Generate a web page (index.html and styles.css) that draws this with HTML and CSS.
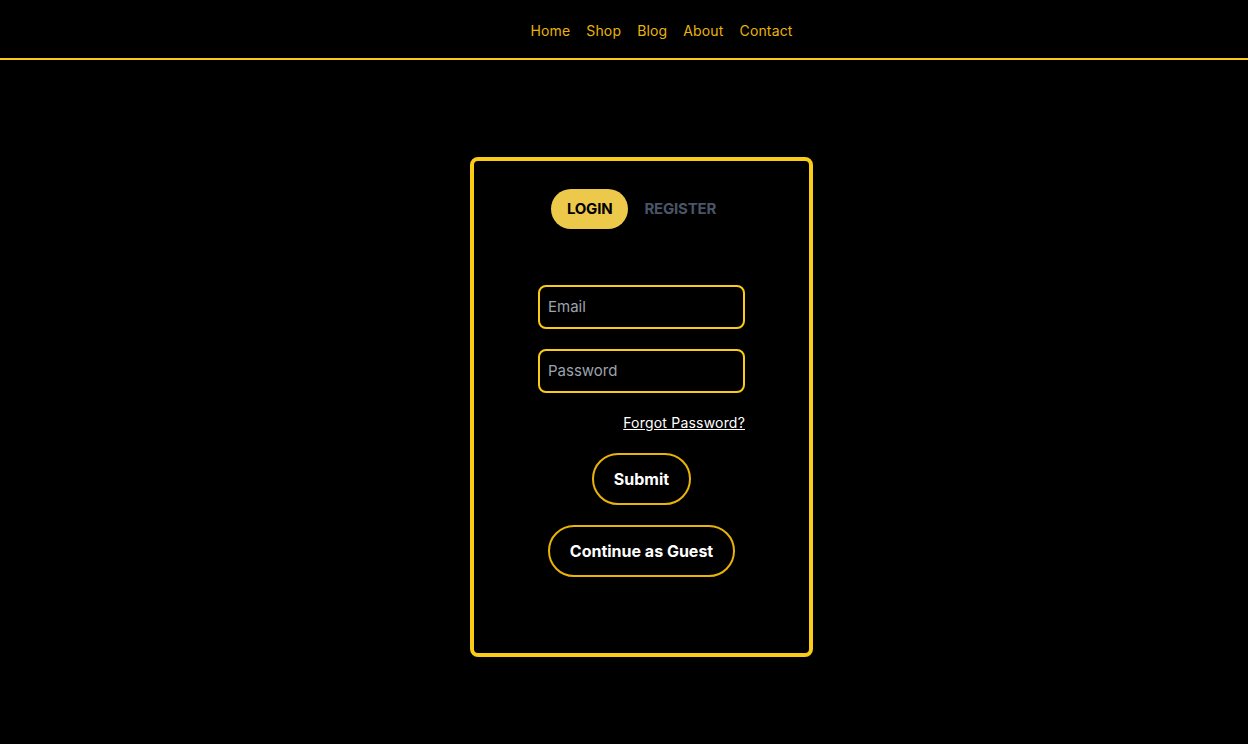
FILE: index.html
```html
<!DOCTYPE html>
<html lang="en">
<head>
<meta charset="utf-8">
<title>Login</title>
<link rel="stylesheet" href="styles.css">
</head>
<body>
<header class="header">
  <nav class="nav">
    <a href="#" class="nav-link">Home</a>
    <a href="#" class="nav-link">Shop</a>
    <a href="#" class="nav-link">Blog</a>
    <a href="#" class="nav-link">About</a>
    <a href="#" class="nav-link">Contact</a>
  </nav>
</header>
<main class="main">
  <section class="card">
    <div class="tabs">
      <button class="tab tab-active">LOGIN</button>
      <button class="tab">REGISTER</button>
    </div>
    <form class="form">
      <input class="field" type="email" placeholder="Email">
      <input class="field" type="password" placeholder="Password">
      <a href="#" class="forgot">Forgot Password?</a>
      <button type="button" class="btn">Submit</button>
      <button type="button" class="btn">Continue as Guest</button>
    </form>
  </section>
</main>
</body>
</html>
```
FILE: styles.css
```css
* { box-sizing: border-box; }
html, body { margin: 0; padding: 0; background: #000; }
body {
  font-family: Inter, "DejaVu Sans", sans-serif;
  color: #fff;
  min-height: 744px;
}
.header {
  height: 60px;
  border-bottom: 2px solid #facc15;
  display: flex;
  align-items: center;
  justify-content: center;
  padding-left: 75px;
}
.nav {
  display: flex;
  gap: 16px;
  margin-top: 3px;
}
.nav-link {
  color: #eab308;
  text-decoration: none;
  font-size: 14px;
  line-height: 20px;
  letter-spacing: 0.15px;
}
.main {
  display: flex;
  justify-content: center;
  padding-top: 97px;
  padding-left: 35px;
}
.card {
  width: 343px;
  height: 500px;
  border: 4px solid #facc15;
  border-radius: 8px;
  padding-top: 28px;
  display: flex;
  flex-direction: column;
  align-items: center;
}
.tabs {
  display: flex;
}
.tab {
  height: 40px;
  padding: 0 16px;
  border: none;
  border-radius: 20px;
  background: transparent;
  color: #4a5568;
  font-family: inherit;
  font-size: 15px;
  font-weight: 700;
  letter-spacing: -0.2px;
  padding-bottom: 1px;
}
.tab-active {
  background: #ecc94b;
  color: #000;
}
.form {
  margin-top: 56px;
  width: 207px;
  display: flex;
  flex-direction: column;
  align-items: center;
}
.field {
  width: 207px;
  height: 44px;
  border: 2px solid #facc15;
  border-radius: 8px;
  background: #000;
  color: #fff;
  padding: 0 8px 2px;
  font-family: inherit;
  font-size: 15px;
  margin-bottom: 20px;
}
.field::placeholder { color: #9ca3af; }
.forgot {
  align-self: flex-end;
  color: #fff;
  font-size: 14px;
  line-height: 20px;
  letter-spacing: 0.2px;
  text-decoration: underline;
  margin-bottom: 20px;
}
.btn {
  height: 52px;
  padding: 0 20px;
  border: 2px solid #eab308;
  border-radius: 26px;
  background: #000;
  color: #fff;
  font-family: inherit;
  font-size: 16px;
  font-weight: 700;
  margin-bottom: 20px;
  white-space: nowrap;
}
```
